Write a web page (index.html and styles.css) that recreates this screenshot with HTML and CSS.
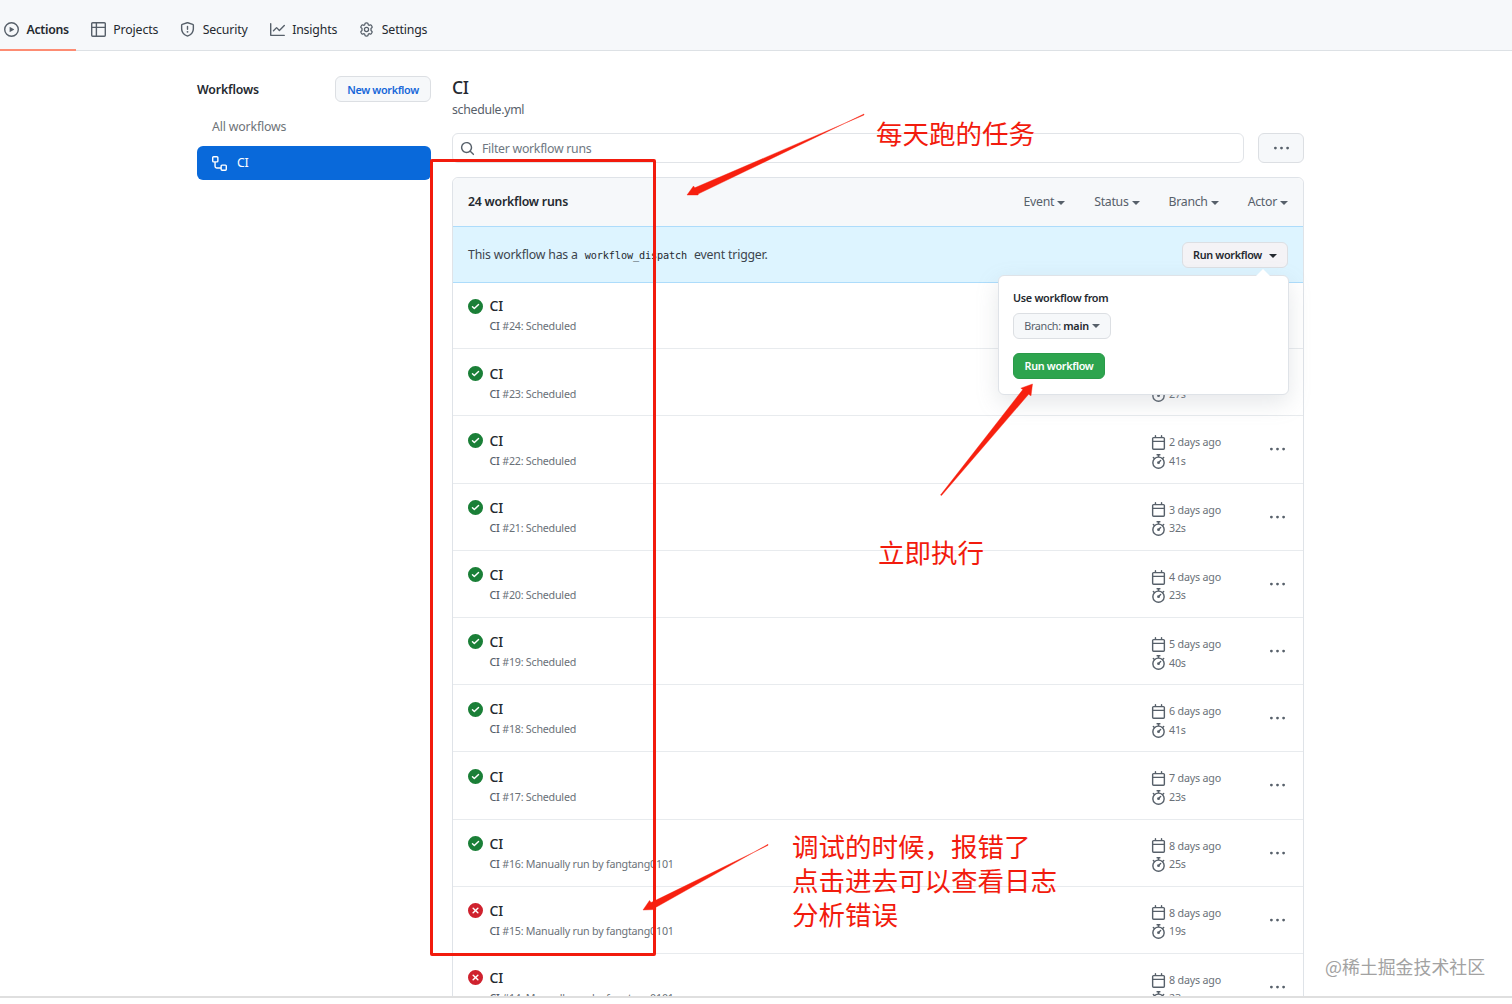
FILE: index.html
```
<!DOCTYPE html>
<html lang="en">
<head>
<meta charset="utf-8">
<title>CI · Workflow runs</title>
<link rel="stylesheet" href="styles.css">
</head>
<body>
<svg class="sprite" aria-hidden="true">
  <symbol id="play" viewBox="0 0 16 16"><path fill-rule="evenodd" d="M1.5 8a6.5 6.5 0 1113 0 6.5 6.5 0 01-13 0zM8 0a8 8 0 100 16A8 8 0 008 0zM6.379 5.227A.25.25 0 006 5.442v5.117a.25.25 0 00.379.214l4.264-2.559a.25.25 0 000-.428L6.379 5.227z"/></symbol>
  <symbol id="table" viewBox="0 0 16 16"><path fill-rule="evenodd" d="M0 1.75C0 .784.784 0 1.75 0h12.5C15.216 0 16 .784 16 1.75v12.5A1.75 1.75 0 0114.250 16H1.750A1.750 1.750 0 010 14.250V1.750zM1.500 6.500v7.750c0 .138.112.250.250.250H5v-8H1.500zM5 5H1.500V1.750a.25.25 0 01.25-.25H5V5zm1.500 1.500v8h7.750a.25.25 0 00.25-.25V6.500h-8zm8-1.500h-8V1.500h7.750a.25.25 0 01.25.25V5z"/></symbol>
  <symbol id="shield" viewBox="0 0 16 16"><path fill-rule="evenodd" d="M7.467.133a1.75 1.75 0 011.066 0l5.250 1.680A1.750 1.750 0 0115 3.480V7c0 1.566-.320 3.182-1.303 4.682-.983 1.498-2.585 2.813-5.032 3.855a1.700 1.700 0 01-1.330 0c-2.447-1.042-4.049-2.357-5.032-3.855C1.320 10.182 1 8.566 1 7V3.480a1.750 1.750 0 011.217-1.667l5.250-1.680zm.610 1.429a.25.25 0 00-.153 0l-5.250 1.680a.25.25 0 00-.174.238V7c0 1.358.275 2.666 1.057 3.860.784 1.194 2.121 2.340 4.366 3.297a.2.2 0 00.154 0c2.245-.956 3.582-2.104 4.366-3.298C13.225 9.666 13.500 8.360 13.500 7V3.480a.25.25 0 00-.174-.237l-5.250-1.680zM9 10.500a1 1 0 11-2 0 1 1 0 012 0zm-.250-5.750a.75.75 0 10-1.500 0v3a.75.75 0 001.500 0v-3z"/></symbol>
  <symbol id="graph" viewBox="0 0 16 16"><path fill-rule="evenodd" d="M1.500 1.750a.75.75 0 00-1.500 0v12.500c0 .414.336.750.750.750h14.500a.75.75 0 000-1.500H1.500V1.750zm14.280 2.530a.75.75 0 00-1.060-1.060L10 7.940 7.530 5.470a.75.75 0 00-1.060 0L3.220 8.720a.75.75 0 001.060 1.060L7 7.060l2.470 2.470a.75.75 0 001.060 0l5.250-5.250z"/></symbol>
  <symbol id="gear" viewBox="0 0 24 24"><path d="M12 1.500c.5 0 1.100.050 1.600.120.450.070.700.400.800.850l.500 2.150 1.300.750 2.150-.650c.450-.130.850 0 1.130.350.650.800 1.200 1.700 1.570 2.700.150.430.050.830-.250 1.150L19.200 10.400v3.200l1.600 1.480c.300.320.400.720.250 1.150-.370 1-.92 1.900-1.570 2.700-.280.350-.680.480-1.130.350l-2.150-.650-1.300.750-.500 2.150c-.100.450-.350.780-.800.850-.500.070-2.700.070-3.200 0-.450-.070-.700-.400-.800-.850l-.500-2.150-1.300-.750-2.150.650c-.450.130-.850 0-1.130-.350a9.300 9.300 0 01-1.570-2.700c-.150-.430-.050-.830.250-1.150l1.600-1.480v-3.200L3.200 8.920c-.3-.32-.4-.72-.25-1.150.370-1 .920-1.900 1.570-2.700.280-.350.680-.480 1.130-.350l2.150.650 1.300-.750.500-2.150c.100-.450.350-.780.800-.850.500-.070 1.100-.120 1.600-.120z" fill="none" stroke="currentColor" stroke-width="2"/><circle cx="12" cy="12" r="3.300" fill="none" stroke="currentColor" stroke-width="2"/></symbol>
  <symbol id="flow" viewBox="0 0 16 16"><path fill-rule="evenodd" d="M0 1.750C0 .784.784 0 1.750 0h3.500C6.216 0 7 .784 7 1.750v3.500A1.750 1.750 0 015.250 7H4v4a1 1 0 001 1h4v-1.250C9 9.784 9.784 9 10.750 9h3.500c.966 0 1.750.784 1.750 1.750v3.500A1.750 1.750 0 0114.250 16h-3.500A1.750 1.750 0 019 14.250v-.750H5A2.500 2.500 0 012.500 11V7h-.750A1.750 1.750 0 010 5.250v-3.500zm1.750-.250a.25.25 0 00-.25.25v3.500c0 .138.112.250.250.250h3.500a.25.25 0 00.25-.25v-3.500a.25.25 0 00-.25-.25h-3.500zm9 9a.25.25 0 00-.25.25v3.500c0 .138.112.250.250.250h3.500a.25.25 0 00.25-.25v-3.500a.25.25 0 00-.25-.25h-3.500z"/></symbol>
  <symbol id="search" viewBox="0 0 16 16"><path fill-rule="evenodd" d="M11.500 7a4.499 4.499 0 11-8.998 0A4.499 4.499 0 0111.500 7zm-.820 4.740a6 6 0 111.060-1.060l3.040 3.040a.75.75 0 11-1.060 1.060l-3.040-3.040z"/></symbol>
  <symbol id="dots" viewBox="0 0 16 16"><path d="M8 9a1.500 1.500 0 100-3 1.500 1.500 0 000 3zM1.500 9a1.500 1.500 0 100-3 1.500 1.500 0 000 3zm13 0a1.500 1.500 0 100-3 1.500 1.500 0 000 3z"/></symbol>
  <symbol id="check" viewBox="0 0 16 16"><path fill-rule="evenodd" d="M8 16A8 8 0 108 0a8 8 0 000 16zm3.780-9.720a.75.75 0 00-1.060-1.060L6.750 9.190 5.280 7.720a.75.75 0 00-1.060 1.060l2 2a.75.75 0 001.060 0l4.500-4.500z"/></symbol>
  <symbol id="cross" viewBox="0 0 16 16"><path fill-rule="evenodd" d="M2.343 13.657A8 8 0 1113.657 2.343 8 8 0 012.343 13.657zM6.030 4.970a.75.75 0 00-1.060 1.060L6.940 8 4.970 9.970a.75.75 0 101.060 1.060L8 9.060l1.970 1.970a.75.75 0 101.060-1.060L9.060 8l1.970-1.970a.75.75 0 10-1.060-1.060L8 6.940 6.030 4.970z"/></symbol>
  <symbol id="calendar" viewBox="0 0 16 16"><path fill-rule="evenodd" d="M4.750 0a.75.75 0 01.75.75V2h5V.75a.75.75 0 011.500 0V2h1.250c.966 0 1.750.784 1.750 1.750v10.500A1.750 1.750 0 0113.250 16H2.750A1.750 1.750 0 011 14.250V3.750C1 2.784 1.784 2 2.750 2H4V.75A.75.75 0 014.750 0zm0 3.500h-2a.25.25 0 00-.25.25V6h11V3.750a.25.25 0 00-.25-.25h-8.500zm8.750 4h-11v6.750c0 .138.112.250.250.250h10.500a.25.25 0 00.25-.25V7.500z"/></symbol>
  <symbol id="timer" viewBox="0 0 16 16"><path fill-rule="evenodd" d="M5.750.75A.75.75 0 016.500 0h3a.75.75 0 010 1.500h-.75v1l-.001.041a6.718 6.718 0 013.464 1.435l.007-.006.750-.750a.75.75 0 111.060 1.060l-.750.750-.006.007a6.750 6.750 0 11-10.548 0L2.720 5.030l-.750-.750a.75.75 0 011.060-1.060l.750.750.007.006A6.718 6.718 0 017.250 2.541V1.500H6.500a.75.75 0 01-.75-.75zM8 14.500A5.250 5.250 0 108 4a5.250 5.250 0 000 10.500zm.389-6.700l1.330-1.330a.75.75 0 111.061 1.060L9.450 8.861A1.502 1.502 0 018 10.750a1.500 1.500 0 11.389-2.950z"/></symbol>
</svg>

<nav class="tabs">
  <a class="tab tab-active"><svg class="icon"><use href="#play"/></svg><span>Actions</span></a>
  <a class="tab"><svg class="icon"><use href="#table"/></svg><span>Projects</span></a>
  <a class="tab"><svg class="icon"><use href="#shield"/></svg><span>Security</span></a>
  <a class="tab"><svg class="icon"><use href="#graph"/></svg><span>Insights</span></a>
  <a class="tab"><svg class="icon"><use href="#gear"/></svg><span>Settings</span></a>
</nav>

<div class="page">
  <aside class="sidebar">
    <div class="side-head"><h2>Workflows</h2><button class="btn btn-new">New workflow</button></div>
    <a class="side-link">All workflows</a>
    <a class="side-link side-current"><svg class="icon"><use href="#flow"/></svg><span>CI</span></a>
  </aside>
  <main class="content">
    <h1>CI</h1>
    <p class="file">schedule.yml</p>
    <div class="filter">
      <div class="search"><svg class="icon"><use href="#search"/></svg><span>Filter workflow runs</span></div>
      <button class="btn btn-more"><svg class="icon"><use href="#dots"/></svg></button>
    </div>
    <section class="box">
      <header class="box-head">
        <strong>24 workflow runs</strong>
        <div class="menus"><span class="menu">Event</span><span class="menu">Status</span><span class="menu">Branch</span><span class="menu">Actor</span></div>
      </header>
      <div class="dispatch">
        <p>This workflow has a <code>workflow_dispatch</code> event trigger.</p>
        <div class="run-menu">
          <button class="btn btn-run menu">Run workflow</button>
          <div class="popover">
            <b>Use workflow from</b>
            <button class="btn btn-branch menu"><span>Branch: <b>main</b></span></button>
            <button class="btn btn-go">Run workflow</button>
          </div>
        </div>
      </div>
      <ul class="runs" id="runs"></ul>
    </section>
  </main>
</div>

<div class="marker"></div>
<svg class="arrows" viewBox="0 0 1512 1004">
  <path d="M864 114L698.500 193.800L698 195L687 195L693.500 186L694.800 187.800L864 115Z"/>
  <path d="M940.500 495L1022.800 389.600L1020.800 388.200L1032.500 384L1031 395.800L1028.600 394.300L941.500 495.500Z"/>
  <path d="M768 844.300L655.600 907.500L656 909.500L643 910L649.500 900.500L651 902.600L768 845.300Z"/>
</svg>
<p class="note note-daily">每天跑的任务</p>
<p class="note note-now">立即执行</p>
<p class="note note-debug">调试的时候，报错了<br>点击进去可以查看日志<br>分析错误</p>
<p class="credit">@稀土掘金技术社区</p>
<script src="runs.js"></script>
</body>
</html>
```
FILE: styles.css
```
* { box-sizing: border-box; }
body {
  margin: 0;
  height: 1004px;
  overflow: hidden;
  position: relative;
  background: #fff;
  color: #24292f;
  font: 12.3px/20px "Noto Sans", "Noto Sans CJK SC", sans-serif;
  letter-spacing: -.3px;
}
h1, h2, p, ul { margin: 0; padding: 0; font-weight: 400; }
.sprite { position: absolute; width: 0; height: 0; }
.icon { width: 15px; height: 15px; fill: currentColor; color: #57606a; flex: none; display: block; }

.tabs { height: 51px; display: flex; gap: 15px; padding-left: 4px; background: #f6f8fa; border-bottom: 1px solid #dde1e5; letter-spacing: -.15px; }
.tab { display: flex; gap: 7.5px; align-items: center; height: 51px; padding: 8px 7px 0 0; }
.tab span { white-space: nowrap; }
.tab-active { font-weight: 600; letter-spacing: -.3px; box-shadow: inset 0 -2px #fd8c73; margin-left: -4px; padding-left: 4px; }

.page { display: flex; gap: 21px; height: 947px; overflow: hidden; padding-left: 197px; border-bottom: 2px solid #dfdfdf; }
.sidebar { width: 234px; padding-top: 25px; }
.side-head { display: flex; justify-content: space-between; align-items: center; height: 26px; margin-bottom: 10px; }
.side-head h2 { padding-top: 2px; font-size: 12.3px; font-weight: 600; letter-spacing: -.15px; }
.btn { display: flex; align-items: center; justify-content: center; height: 26px; margin: 0; padding: 0 11px; border: 1px solid #dcdfe3; border-radius: 6px; background: #f6f8fa; color: #24292f; font: 600 10.8px "Noto Sans", sans-serif; letter-spacing: -.32px; white-space: nowrap; }
.btn-new { width: 96px; color: #1667d9; }
.side-link { display: flex; align-items: center; gap: 10px; height: 30px; padding-left: 15px; color: #6e7378; letter-spacing: -.15px; }
.side-current { height: 34px; margin-top: 4px; border-radius: 6px; background: #0969da; color: #fff; }
.side-current .icon { color: #fff; }

.content { width: 852px; padding-top: 23px; }
h1 { font-size: 17.5px; line-height: 26px; font-weight: 500; }
.file { line-height: 19px; padding-bottom: 1px; color: #57606a; }
.filter { display: flex; gap: 14px; margin-top: 13px; }
.search { flex: 1; display: flex; gap: 7.5px; align-items: center; height: 30px; padding-left: 6.5px; border: 1px solid #e1e4e8; border-radius: 6px; color: #6e7781; letter-spacing: -.27px; }
.search span { padding-top: 1px; }
.btn-more { width: 46px; height: 30px; padding: 0; }
.box { margin-top: 14px; border: 1px solid #dfe3e8; border-radius: 6px; }
.box-head { display: flex; justify-content: space-between; align-items: center; height: 48px; padding: 0 15px; background: #f6f8fa; border-radius: 6px 6px 0 0; }
.box-head strong { font-weight: 600; letter-spacing: -.22px; }
.menus { display: flex; gap: 29px; color: #57606a; letter-spacing: -.28px; }
.menu::after { content: ""; display: inline-block; margin-left: 3px; vertical-align: 1px; border: 4px solid transparent; border-top-color: currentColor; border-bottom: 0; }
.dispatch { display: flex; justify-content: space-between; align-items: center; height: 57px; padding: 0 15px; margin-bottom: -1px; background: #ddf4ff; border: solid #addcfb; border-width: 1px 0; color: #3c444d; letter-spacing: -.19px; }
.dispatch code { padding: 0 4px; font: 10.2px "DejaVu Sans Mono", monospace; letter-spacing: -.12px; color: #24292f; }
.run-menu { position: relative; }
.btn-run { width: 106px; background: #f4f3f6; }
.btn-run::after { margin: 2px 0 0 7px; }
.popover { position: absolute; z-index: 2; top: 33px; right: -1px; width: 291px; height: 120px; padding: 13px 14px; border: 1px solid #dfe3e8; border-radius: 6px; background: #fff; box-shadow: 0 8px 22px rgba(140,149,159,.22); color: #24292f; font-size: 10.8px; line-height: 17px; }
.popover::before { content: ""; position: absolute; top: -7px; right: 18px; border: 7px solid transparent; border-bottom-color: #fff; border-top: 0; }
.popover b { display: block; font-weight: 600; letter-spacing: -.27px; }
.btn-branch { width: 98px; margin: 7px 0 14px; font-weight: 400; color: #57606a; }
.btn-branch b { display: inline; color: #24292f; }
.btn-go { width: 92px; background: #2da44e; border-color: #2a9a49; color: #fff; }

.runs { list-style: none; }
.run { display: flex; height: 67.2px; padding: 15px 18.5px 0 15px; border-bottom: 1px solid #e8ebee; }
.state { margin: 1.5px 0 0 -.5px; color: #1a7f37; }
.state-failed { color: #cf222e; }
.run-info { flex: 1; margin: -.7px 0 0 7px; font-size: 10.7px; color: #6a7178; line-height: 17.6px; letter-spacing: -.22px; }
.run-info h3 { margin: 0 0 2px; font-size: 14px; font-weight: 500; line-height: 20px; color: #24292f; }
.run-info b { font-weight: 500; color: #57606a; }
.times { width: 118.5px; padding-top: 2px; font-size: 10.7px; line-height: 18.6px; color: #6a7178; letter-spacing: -.18px; }
.times div { display: flex; align-items: center; gap: 3px; }
.run > .dots { margin-top: 11px; }

.marker { position: absolute; left: 430px; top: 159px; width: 226px; height: 797px; border: 3px solid #f21b0d; border-radius: 2px; z-index: 3; }
.arrows { position: absolute; inset: 0; width: 1512px; height: 1004px; fill: #f7200f; stroke: #f7200f; stroke-width: .4; z-index: 4; }
.note { position: absolute; z-index: 4; color: #f21b0d; font: 26.5px/34px "Noto Sans CJK SC", sans-serif; letter-spacing: 0; white-space: nowrap; }
.note-daily { left: 876px; top: 116px; }
.note-now { left: 878px; top: 535px; }
.note-debug { left: 792px; top: 829px; }
.credit { position: absolute; left: 1325px; top: 954px; font: 17.9px/24px "Noto Sans CJK SC", sans-serif; letter-spacing: 0; color: #a2a2a2; text-shadow: 0 0 2px #fff; white-space: nowrap; }
```
FILE: runs.js
```
const runs = [
  [24, "Scheduled", "yesterday", "30s"],
  [23, "Scheduled", "yesterday", "27s"],
  [22, "Scheduled", "2 days ago", "41s"],
  [21, "Scheduled", "3 days ago", "32s"],
  [20, "Scheduled", "4 days ago", "23s"],
  [19, "Scheduled", "5 days ago", "40s"],
  [18, "Scheduled", "6 days ago", "41s"],
  [17, "Scheduled", "7 days ago", "23s"],
  [16, "Manually run by fangtang0101", "8 days ago", "25s"],
  [15, "Manually run by fangtang0101", "8 days ago", "19s", true],
  [14, "Manually run by fangtang0101", "8 days ago", "23s", true]
];
const icon = (name, cls = "") => `<svg class="icon ${cls}"><use href="#${name}"/></svg>`;
document.getElementById("runs").innerHTML = runs.map(([id, trigger, when, took, failed]) => `
  <li class="run">
    ${failed ? icon("cross", "state state-failed") : icon("check", "state")}
    <div class="run-info"><h3>CI</h3><b>CI</b> #${id}: ${trigger}</div>
    <div class="times"><div>${icon("calendar")}${when}</div><div>${icon("timer")}${took}</div></div>
    ${icon("dots", "dots")}
  </li>`).join("");
```
